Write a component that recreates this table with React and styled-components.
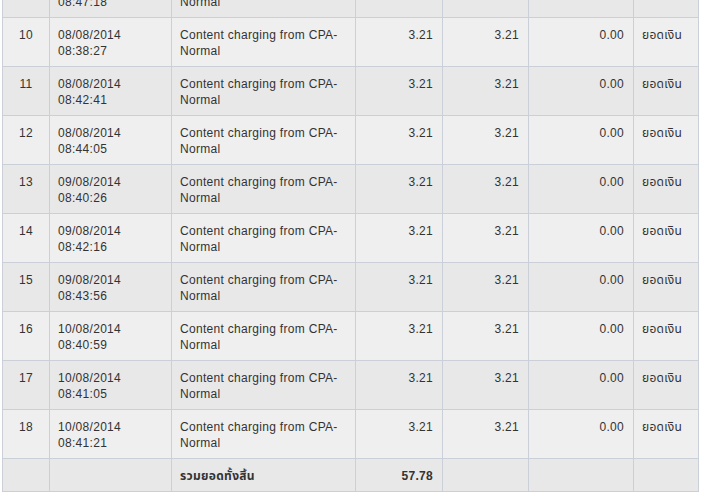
import React from 'react';
import styled, { createGlobalStyle } from 'styled-components';

const GlobalStyle = createGlobalStyle`
  html, body {
    margin: 0;
    padding: 0;
    background: #ffffff;
    overflow: hidden;
  }
  body {
    font-family: "Liberation Sans", "Noto Sans Thai", "DejaVu Sans", sans-serif;
    font-size: 12px;
    letter-spacing: 0.3px;
    color: #333333;
  }
`

const BORDER = '#cbd0d8';

const Table = styled.table`
  table-layout: fixed;
  width: 697px;
  margin: -31px 0 0 2px;
  border-collapse: separate;
  border-spacing: 0;
  border-left: 1px solid ${BORDER};
`

const Row = styled.tr`
  background-color: ${props => (props.$light ? '#efefef' : '#e8e8e8')};
`

const Cell = styled.td`
  box-sizing: border-box;
  padding: 9px 8px 7px;
  line-height: 16px;
  vertical-align: top;
  border-right: 1px solid ${BORDER};
  border-bottom: 1px solid ${BORDER};
  text-align: ${props => props.$align || 'left'};
  font-weight: ${props => (props.$bold ? 700 : 400)};
  white-space: ${props => (props.$nowrap ? 'nowrap' : 'normal')};
`

const NumCell = styled(Cell)`
  text-align: right;
  padding-right: 9px;
`

const COLS = [47, 122, 184, 87, 86, 105, 65];

const items = [
  { no: 9, date: '07/08/2014', time: '08:47:18' },
  { no: 10, date: '08/08/2014', time: '08:38:27' },
  { no: 11, date: '08/08/2014', time: '08:42:41' },
  { no: 12, date: '08/08/2014', time: '08:44:05' },
  { no: 13, date: '09/08/2014', time: '08:40:26' },
  { no: 14, date: '09/08/2014', time: '08:42:16' },
  { no: 15, date: '09/08/2014', time: '08:43:56' },
  { no: 16, date: '10/08/2014', time: '08:40:59' },
  { no: 17, date: '10/08/2014', time: '08:41:05' },
  { no: 18, date: '10/08/2014', time: '08:41:21' },
];

const App = () => (
  <>
    <GlobalStyle />
    <Table>
      <colgroup>
        {COLS.map((w, i) => <col key={i} style={{ width: w }} />)}
      </colgroup>
      <tbody>
        {items.map(item => (
          <Row key={item.no} $light={item.no % 2 === 0}>
            <Cell $align="center">{item.no}</Cell>
            <Cell>{item.date}<br />{item.time}</Cell>
            <Cell>Content charging from CPA-<br />Normal</Cell>
            <NumCell>3.21</NumCell>
            <NumCell>3.21</NumCell>
            <NumCell>0.00</NumCell>
            <Cell $nowrap>ยอดเงิน</Cell>
          </Row>
        ))}
        <Row>
          <Cell />
          <Cell />
          <Cell $bold>รวมยอดทั้งสิ้น</Cell>
          <NumCell $bold>57.78</NumCell>
          <Cell />
          <Cell />
          <Cell />
        </Row>
      </tbody>
    </Table>
  </>
);

export default App;
